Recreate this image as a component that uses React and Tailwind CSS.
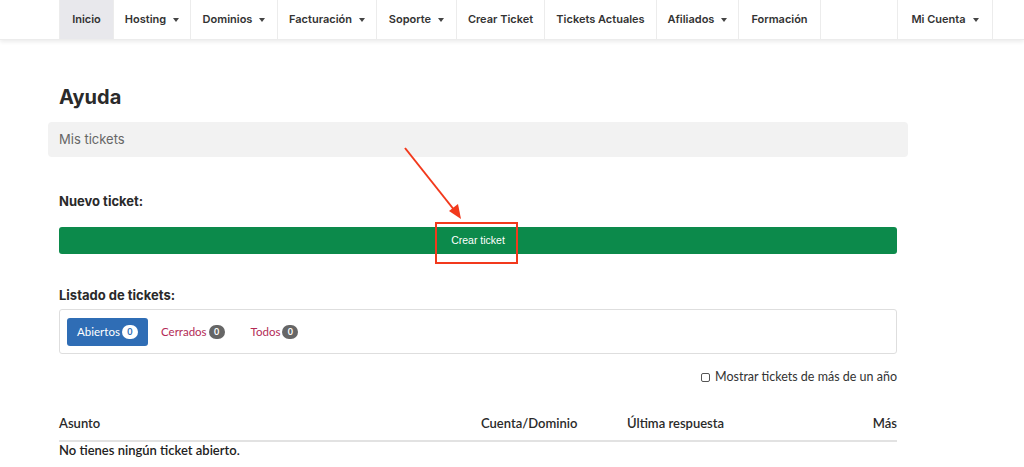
import React from "react";

const navItems = [
  { label: "Inicio", w: "w-[54px]", active: true },
  { label: "Hosting", w: "w-[77px]", caret: true },
  { label: "Dominios", w: "w-[87px]", caret: true },
  { label: "Facturación", w: "w-[99px]", caret: true },
  { label: "Soporte", w: "w-[80px]", caret: true },
  { label: "Crear Ticket", w: "w-[88px]" },
  { label: "Tickets Actuales", w: "w-[112px]" },
  { label: "Afiliados", w: "w-[82px]", caret: true },
  { label: "Formación", w: "w-[82px]" },
];

const Caret = () => (
  <span className="ml-[7px] inline-block w-0 h-0 border-x-[3.5px] border-t-[4px] border-x-transparent border-t-[#444]" />
);

const Badge = ({ light }) => (
  <span
    className={`ml-[2px] inline-flex items-center justify-center h-[14px] min-w-[16px] px-[4px] rounded-full text-[9px] font-bold ${
      light ? "bg-white text-[#2f6db5]" : "bg-[#666] text-white"
    }`}
  >
    0
  </span>
);

export default function App() {
  return (
    <div className="relative min-h-[467px] bg-white font-['Inter',sans-serif] text-[#2a2a2a] overflow-hidden">
      {/* top navigation */}
      <nav className="h-[40px] bg-white shadow-[0_2px_4px_rgba(0,0,0,0.08)] border-b border-[#ececec] flex">
        <div className="ml-[59px] flex border-l border-[#ececec]">
          {navItems.map((item) => (
            <div
              key={item.label}
              className={`${item.w} h-full flex items-center justify-center border-r border-[#ececec] text-[11px] font-semibold text-[#333] ${
                item.active ? "bg-[#e8e8ec]" : ""
              }`}
            >
              {item.label}
              {item.caret && <Caret />}
            </div>
          ))}
        </div>
        <div className="ml-auto mr-[31px] w-[96px] flex items-center justify-center border-x border-[#ececec] text-[11px] font-semibold text-[#333]">
          Mi Cuenta
          <Caret />
        </div>
      </nav>

      <main className="ml-[59px] w-[838px]">
        <h1 className="mt-[45px] text-[20px] font-bold leading-[24px] text-[#2a2a2a]">Ayuda</h1>

        <div className="-mx-[11px] mt-[13px] h-[35px] rounded-[4px] bg-[#f2f2f2] flex items-center px-[11px] text-[13px] text-[#666]">
          Mis tickets
        </div>

        <h2 className="mt-[35px] text-[13px] font-bold leading-[18px]">Nuevo ticket:</h2>

        <div className="mt-[17px] h-[27px] rounded-[3px] bg-[#0c8a4b] flex items-center justify-center pt-[1px] text-[10.5px] text-white font-['Liberation_Sans',sans-serif]">
          Crear ticket
        </div>

        <h2 className="mt-[32px] text-[13px] font-bold leading-[18px]">Listado de tickets:</h2>

        <div className="mt-[5px] h-[45px] rounded-[3px] border border-[#dedede] flex items-center px-[7px] gap-[12px] text-[11.5px] font-['Lato',sans-serif]">
          <div className="h-[28px] w-[81px] rounded-[3px] bg-[#2f6db5] text-white flex items-center justify-center">
            Abiertos
            <Badge light />
          </div>
          <div className="px-[1px] flex items-center text-[#b32a55]">
            Cerrados
            <Badge />
          </div>
          <div className="ml-[13px] flex items-center text-[#b32a55]">
            Todos
            <Badge />
          </div>
        </div>

        <div className="mt-[15px] flex justify-end items-center text-[12.5px] leading-[16px] text-[#333] font-['Lato',sans-serif]">
          <span className="w-[9px] h-[9px] border border-[#555] rounded-[2px] mr-[5px]" />
          Mostrar tickets de más de un año
        </div>

        <div className="mt-[30px] grid grid-cols-[422px_146px_1fr_60px] leading-[16px] pb-[9px] border-b-2 border-[#e2e2e2] text-[13px] font-semibold font-['Lato',sans-serif] text-[#2a2a2a]">
          <span>Asunto</span>
          <span>Cuenta/Dominio</span>
          <span>Última respuesta</span>
          <span className="text-right">Más</span>
        </div>
        <div className="mt-[1px] leading-[14px] text-[13px] font-semibold font-['Lato',sans-serif] text-[#222]">
          No tienes ningún ticket abierto.
        </div>
      </main>

      {/* red annotation overlay */}
      <svg className="absolute left-0 top-0 pointer-events-none" width="1024" height="467">
        <line x1="405" y1="148" x2="455" y2="211" stroke="#f2391c" strokeWidth="2" />
        <polygon points="461,219 449,211 458,204" fill="#f2391c" />
      </svg>
      <div className="absolute left-[435px] top-[222px] w-[83px] h-[42px] border-2 border-[#f2391c]" />
    </div>
  );
}
